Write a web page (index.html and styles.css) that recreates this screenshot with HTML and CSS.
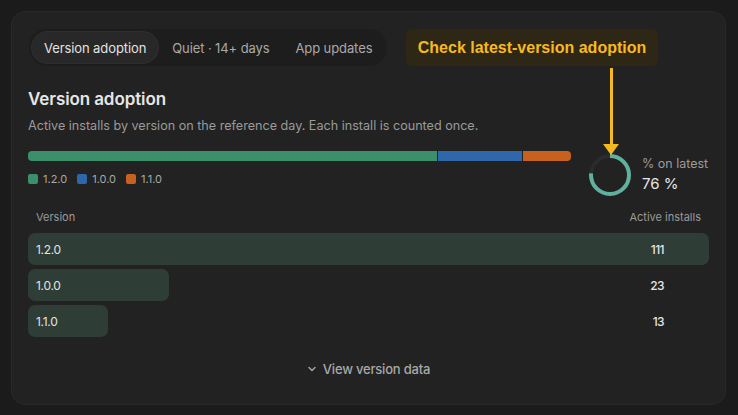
FILE: index.html
```html
<!DOCTYPE html>
<html lang="en">
<head>
<meta charset="utf-8">
<title>Version adoption</title>
<link rel="stylesheet" href="styles.css">
</head>
<body>
<div class="card">
  <div class="tabs">
    <button class="tab active">Version adoption</button>
    <button class="tab">Quiet · 14+ days</button>
    <button class="tab">App updates</button>
  </div>

  <h2 class="title">Version adoption</h2>
  <p class="subtitle">Active installs by version on the reference day. Each install is counted once.</p>

  <div class="summary">
    <div class="dist">
      <div class="stack">
        <span class="seg seg-green" style="flex: 111"></span>
        <span class="seg seg-blue" style="flex: 23"></span>
        <span class="seg seg-orange" style="flex: 13"></span>
      </div>
      <div class="legend">
        <span class="key"><i class="sw sw-green"></i>1.2.0</span>
        <span class="key"><i class="sw sw-blue"></i>1.0.0</span>
        <span class="key"><i class="sw sw-orange"></i>1.1.0</span>
      </div>
    </div>
    <div class="latest">
      <svg class="donut" width="44" height="44" viewBox="0 0 44 44">
        <circle cx="22" cy="22" r="19" class="track"/>
        <circle cx="22" cy="22" r="19" class="arc" stroke-dasharray="90.7 119.4" transform="rotate(-90 22 22)"/>
      </svg>
      <div class="latest-text">
        <div class="latest-label">% on latest</div>
        <div class="latest-value">76 %</div>
      </div>
    </div>
  </div>

  <div class="table">
    <div class="thead">
      <span>Version</span>
      <span>Active installs</span>
    </div>
    <div class="row">
      <span class="fill" style="width: 100%"></span>
      <span class="ver">1.2.0</span>
      <span class="num">111</span>
    </div>
    <div class="row">
      <span class="fill" style="width: 20.72%"></span>
      <span class="ver">1.0.0</span>
      <span class="num">23</span>
    </div>
    <div class="row">
      <span class="fill" style="width: 11.71%"></span>
      <span class="ver">1.1.0</span>
      <span class="num">13</span>
    </div>
  </div>

  <button class="more">
    <svg width="10" height="10" viewBox="0 0 10 10"><path d="M2 3.5 L5 6.5 L8 3.5" fill="none" stroke="currentColor" stroke-width="1.4" stroke-linecap="round" stroke-linejoin="round"/></svg>
    View version data
  </button>

  <div class="callout">Check latest-version adoption</div>
  <div class="pointer">
    <span class="shaft"></span>
    <span class="head"></span>
  </div>
</div>
</body>
</html>
```

FILE: styles.css
```css
* { box-sizing: border-box; }

html, body {
  margin: 0;
  padding: 0;
  background: #1b1b1b;
}

body {
  font-family: "Inter", "DejaVu Sans", sans-serif;
  color: #e4e4e4;
  padding: 11px 12px 10px 11px;
}

.card {
  position: relative;
  background: #222222;
  border: 1px solid #292929;
  border-radius: 14px;
  padding: 17px 16px 16px 16px;
  height: 394px;
}

.tabs {
  display: inline-flex;
  background: #1d1d1d;
  border-radius: 18px;
  padding: 2px;
  margin-left: 1px;
}

.tab {
  font-family: inherit;
  font-size: 13px;
  color: #a9a9a9;
  background: transparent;
  border: 1px solid transparent;
  border-radius: 16px;
  height: 33px;
  padding: 0 12px;
  letter-spacing: -0.1px;
}

.tab.active {
  background: #282828;
  border-color: #2e2e2e;
  color: #e2e2e2;
}

.title {
  margin: 22px 0 0 0;
  font-size: 17px;
  font-weight: 600;
  color: #e6e6e6;
  line-height: 22px;
  letter-spacing: -0.1px;
}

.subtitle {
  margin: 8px 0 0 0;
  font-size: 12.6px;
  line-height: 16px;
  color: #9a9a9a;
}

.summary {
  display: flex;
  align-items: flex-start;
  gap: 18px;
  margin-top: 15px;
}

.dist {
  flex: 1;
  padding-top: 2px;
}

.stack {
  display: flex;
  gap: 1px;
  height: 10px;
  border-radius: 4px;
  overflow: hidden;
}

.seg { display: block; }
.seg-green { background: #3b8f6b; }
.seg-blue { background: #2f67ab; }
.seg-orange { background: #c8601f; }

.legend {
  display: flex;
  gap: 10px;
  margin-top: 11px;
  font-size: 11px;
  color: #a8a8a8;
}

.key {
  display: inline-flex;
  align-items: center;
  gap: 5px;
}

.sw {
  display: inline-block;
  width: 10px;
  height: 10px;
  border-radius: 2px;
}
.sw-green { background: #3b8f6b; }
.sw-blue { background: #2f67ab; }
.sw-orange { background: #c8601f; }

.latest {
  display: flex;
  align-items: center;
  gap: 10px;
  width: 120px;
  margin-top: 4px;
  white-space: nowrap;
}

.donut { display: block; flex: none; margin-left: -1px; }
.track { fill: none; stroke: #2b2b2b; stroke-width: 4; }
.arc { fill: none; stroke: #5fb09e; stroke-width: 4; }

.latest-label {
  font-size: 12.5px;
  color: #9c9c9c;
  line-height: 16px;
}

.latest-value {
  font-size: 15px;
  color: #e6e6e6;
  line-height: 20px;
  margin-top: 2px;
}

.table {
  margin-top: 13px;
}

.thead {
  display: flex;
  justify-content: space-between;
  font-size: 11px;
  color: #9a9a9a;
  padding: 0 8px;
  line-height: 14px;
  margin-bottom: 9px;
}

.row {
  position: relative;
  display: flex;
  justify-content: space-between;
  align-items: center;
  height: 32px;
  margin-bottom: 4px;
  padding: 0 45px 0 8px;
  font-size: 12px;
  color: #e4e4e4;
}

.fill {
  position: absolute;
  left: 0;
  top: 0;
  bottom: 0;
  background: #2e3d35;
  border-radius: 7px;
}

.ver, .num {
  position: relative;
  letter-spacing: -0.3px;
}

.num { font-weight: 500; letter-spacing: -0.6px; }

.more {
  display: flex;
  align-items: center;
  gap: 6px;
  margin: 23px auto 0;
  background: transparent;
  border: 0;
  font-family: inherit;
  font-size: 13px;
  font-weight: 500;
  color: #a8a8a8;
  letter-spacing: -0.2px;
}

.callout {
  position: absolute;
  left: 394px;
  top: 17px;
  width: 252px;
  height: 37px;
  display: flex;
  align-items: center;
  justify-content: center;
  background: #2e2715;
  border-radius: 6px;
  font-family: "Liberation Sans", Arial, sans-serif;
  font-weight: 700;
  font-size: 16px;
  color: #f6ba21;
}

.pointer {
  position: absolute;
  left: 591px;
  top: 56px;
  width: 16px;
  display: flex;
  flex-direction: column;
  align-items: center;
}

.shaft {
  display: block;
  width: 3px;
  height: 76px;
  background: #f6ba21;
}

.head {
  display: block;
  width: 0;
  height: 0;
  border-left: 8px solid transparent;
  border-right: 8px solid transparent;
  border-top: 11px solid #f6ba21;
}
```
